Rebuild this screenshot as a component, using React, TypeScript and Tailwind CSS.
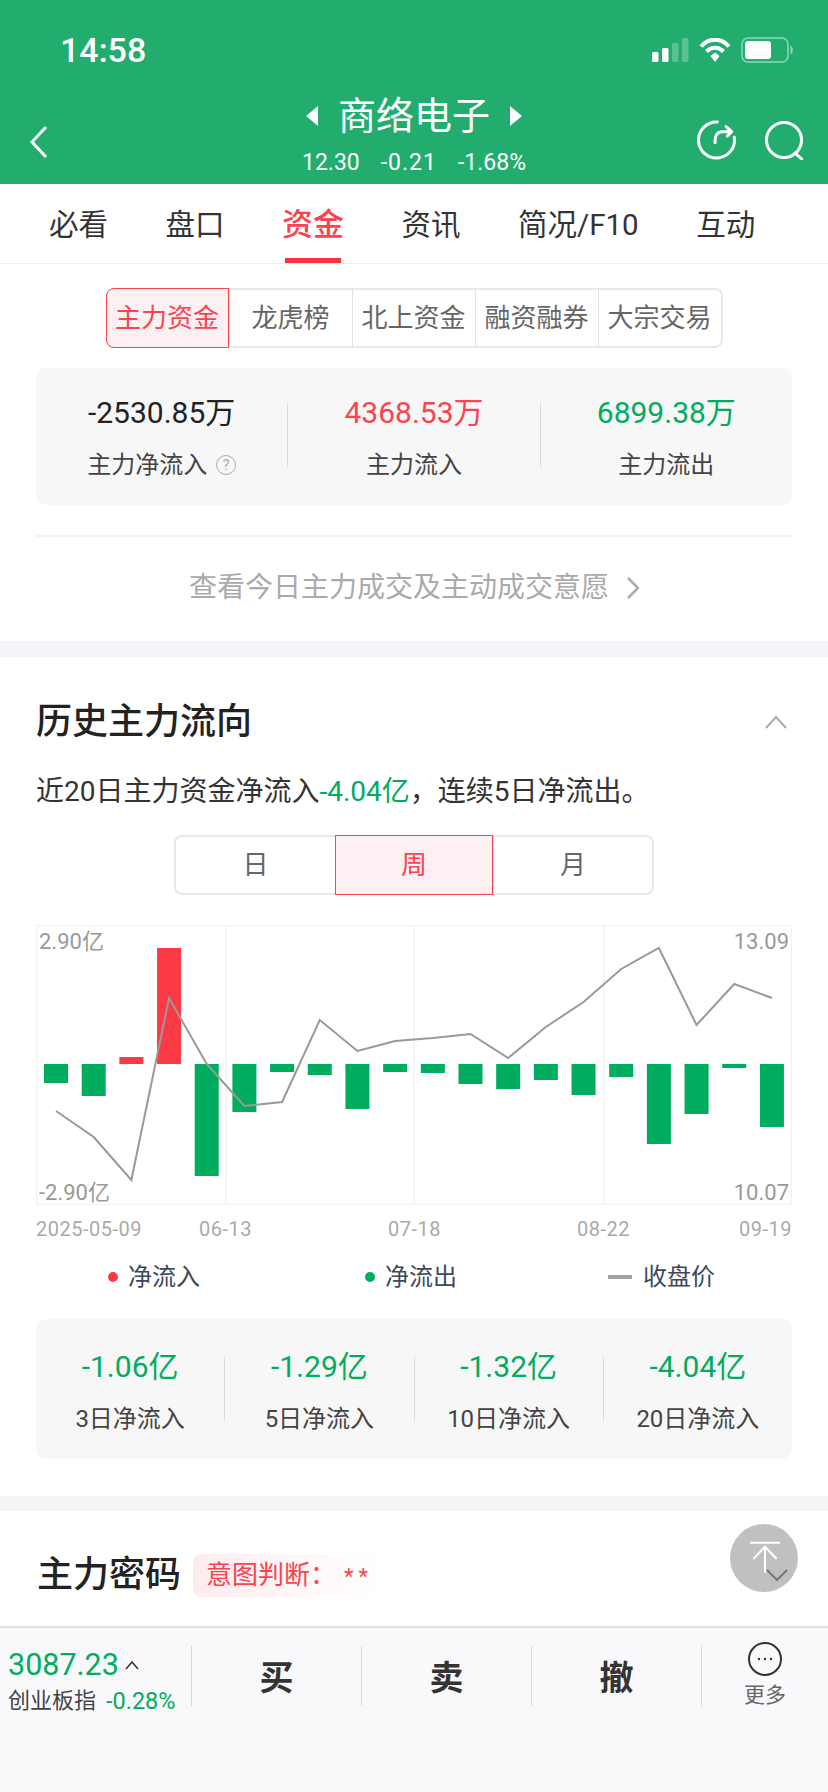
const FONT = "font-['Roboto','Noto_Sans_CJK_SC',sans-serif]";

const bars = [-19, -32, 7, 116, -112, -48, -8, -11, -45, -8, -9, -20, -25, -16, -31, -13, -80, -50, -4, -63];
const closes = [186, 212, 255, 73, 139, 181, 177, 95, 126, 116, 113, 109, 133, 102, 77, 44, 23, 100, 59, 73];

const Chart = () => {
  const x = (i: number) => 20 + 37.68 * i;
  return (
    <div className="relative mt-[30px] mx-[36px] h-[280px]">
      <svg viewBox="0 0 756 280" className="block w-[756px] h-[280px]">
        <rect x="0.5" y="0.5" width="755" height="279" fill="none" stroke="#f2f2f2" strokeWidth="1.5" />
        {[190, 378, 568].map((g) => (
          <line key={g} x1={g} x2={g} y1="0" y2="280" stroke="#f2f2f2" strokeWidth="1.5" />
        ))}
        <line x1="0" x2="756" y1="139" y2="139" stroke="#f2f2f2" strokeWidth="1.5" strokeDasharray="6 8" />
        {bars.map((b, i) => (
          <rect
            key={i}
            x={x(i) - 12}
            y={b > 0 ? 139 - b : 139}
            width="24"
            height={Math.abs(b)}
            fill={b > 0 ? "#fb3a46" : "#00ac5e"}
          />
        ))}
        <polyline
          points={closes.map((c, i) => `${x(i)},${c}`).join(" ")}
          fill="none"
          stroke="#999999"
          strokeWidth="2"
        />
      </svg>
      <span className="absolute left-[3px] top-[3px] text-[22px] leading-[28px] text-[#999]">2.90亿</span>
      <span className="absolute left-[3px] bottom-[-2px] text-[22px] leading-[28px] text-[#999]">-2.90亿</span>
      <span className="absolute right-[3px] top-[3px] text-[22px] leading-[28px] text-[#999]">13.09</span>
      <span className="absolute right-[3px] bottom-[-2px] text-[22px] leading-[28px] text-[#999]">10.07</span>
    </div>
  );
};

const StatCell = ({ value, label, color, help }: { value: string; label: string; color: string; help?: boolean }) => (
  <div className="flex-1 flex flex-col items-center">
    <div className={`text-[30px] leading-[40px] ${color}`}>{value}</div>
    <div className="mt-[12px] flex items-center gap-[9px] text-[24px] leading-[40px] text-[#444]">
      {label}
      {help && (
        <span className="w-[20px] h-[20px] rounded-full border border-[#aaa] text-[#aaa] text-[14px] leading-[18px] text-center">?</span>
      )}
    </div>
  </div>
);

const Segment = ({ items, active, cell }: { items: string[]; active: number; cell: string }) => (
  <div className="flex border-2 border-[#e8e8e8] rounded-[8px] h-[60px]">
    {items.map((t, i) => (
      <div
        key={t}
        className={`${cell} -my-[2px] flex items-center justify-center text-[26px] ${
          i === active
            ? "border border-[#f9434f] bg-[#fdf0f2] text-[#f9434f] first:rounded-l-[8px] first:-ml-[2px]"
            : "text-[#666] border-l border-l-[#e2e2e2] first:border-l-0"
        }`}
      >
        {t}
      </div>
    ))}
  </div>
);

const Divider = ({ h }: { h: string }) => <div className={`w-px ${h} bg-[#d9d9d9] shrink-0`} />;

export default function App() {
  return (
    <div className={`${FONT} relative w-[828px] h-[1792px] overflow-hidden flex flex-col bg-white`}>
      {/* header */}
      <header className="bg-[#22ad6f] text-white h-[184px] pt-[30px] shrink-0">
        <div className="h-[40px] pl-[60px] pr-[34px] flex items-center justify-between">
          <span className="text-[34px] leading-[40px] font-medium">14:58</span>
          <div className="flex items-center gap-[10px]">
            <svg width="37" height="24" viewBox="0 0 37 24">
              <rect x="0" y="14" width="6.500" height="10" rx="1.500" fill="#fff" />
              <rect x="10" y="10" width="6.500" height="14" rx="1.500" fill="#fff" />
              <rect x="20" y="5" width="6.500" height="19" rx="1.500" fill="#fff" fillOpacity="0.25" />
              <rect x="30" y="0" width="6.500" height="24" rx="1.500" fill="#fff" fillOpacity="0.25" />
            </svg>
            <svg width="32" height="25" viewBox="0 0 32 25">
              <path d="M2 8.500C10-.5 22-.5 30 8.500" fill="none" stroke="#fff" strokeWidth="4" />
              <path d="M7.500 13.500C12.500 8.500 19.500 8.500 24.500 13.500" fill="none" stroke="#fff" strokeWidth="4" />
              <path d="M11.500 18 16 14.500 20.500 18 16 24Z" fill="#fff" />
            </svg>
            <svg width="53" height="26" viewBox="0 0 53 26">
              <rect x="1" y="1" width="46" height="24" rx="6" fill="none" stroke="#fff" strokeOpacity="0.5" strokeWidth="1.500" />
              <rect x="4" y="4" width="26" height="18" rx="3" fill="#fff" />
              <path d="M49.500 8.500c3 1 3 8 0 9z" fill="#fff" fillOpacity="0.5" />
            </svg>
          </div>
        </div>
        <div className="h-[114px] flex">
          <div className="w-[150px] pl-[30px] pt-[56px]">
            <svg width="18" height="32" viewBox="0 0 18 32" fill="none" stroke="#fff" strokeWidth="3">
              <path d="M16 1 2 16l14 15" />
            </svg>
          </div>
          <div className="flex-1 flex flex-col items-center">
            <div className="mt-[24px] h-[44px] flex items-center gap-[20px]">
              <span className="w-0 h-0 border-y-[10px] border-y-transparent border-r-[12px] border-r-white" />
              <span className="text-[38px] leading-[44px]">商络电子</span>
              <span className="w-0 h-0 border-y-[10px] border-y-transparent border-l-[12px] border-l-white" />
            </div>
            <div className="mt-[11px] flex gap-[21px] text-[23px] leading-[28px]">
              <span>12.30</span>
              <span className="tracking-[1px]">-0.21</span>
              <span>-1.68%</span>
            </div>
          </div>
          <div className="w-[150px] pr-[24px] pt-[50px] flex justify-end gap-[28px]">
            <svg width="40" height="40" viewBox="0 0 40 40" fill="none" stroke="#fff" strokeWidth="3" strokeLinecap="round" strokeLinejoin="round">
              <path d="M21.300 2A18 18 0 1 0 38.300 17.300" />
              <path d="M19 22.700C19 15 21 11.700 27 11.700H35.500M30 6.700l5.700 5-4.400 4.300" />
            </svg>
            <svg width="40" height="40" viewBox="0 0 40 40" fill="none" stroke="#fff" strokeWidth="3" strokeLinecap="round">
              <circle cx="20" cy="20" r="17.500" />
              <path d="m31 33 6.700 6" />
            </svg>
          </div>
        </div>
      </header>

      {/* tabs */}
      <nav className="h-[80px] shrink-0 border-b border-[#eeeeee] pl-[49px] flex gap-[57.500px] text-[29.500px] text-[#333]">
        <span className="leading-[82px]">必看</span>
        <span className="leading-[82px]">盘口</span>
        <span className="relative leading-[82px] text-[31px] font-medium text-[#f9434f]">
          资金
          <span className="absolute left-[3px] right-[3px] bottom-0 h-[5px] bg-[#f9343f]" />
        </span>
        <span className="leading-[82px]">资讯</span>
        <span className="leading-[82px]">简况/F10</span>
        <span className="leading-[82px]">互动</span>
      </nav>

      <main className="flex-1 min-h-0 overflow-hidden">
        <section className="h-[377px] pt-[24px]">
          <div className="flex justify-center">
            <Segment items={["主力资金", "龙虎榜", "北上资金", "融资融券", "大宗交易"]} active={0} cell="w-[123px]" />
          </div>
          <div className="mx-[36px] mt-[20px] h-[137px] rounded-[10px] bg-[#f7f7f7] pt-[25px] flex">
            <StatCell value="-2530.85万" label="主力净流入" color="text-[#222]" help />
            <div className="pt-[10px]"><Divider h="h-[64px]" /></div>
            <StatCell value="4368.53万" label="主力流入" color="text-[#f9434f]" />
            <div className="pt-[10px]"><Divider h="h-[64px]" /></div>
            <StatCell value="6899.38万" label="主力流出" color="text-[#00ac5e]" />
          </div>
          <div className="mx-[36px] mt-[30px] h-[2px] bg-[#f3f3f3]" />
          <div className="mt-[27px] flex items-center justify-center gap-[18px] text-[28px] leading-[48px] text-[#aaaaaa]">
            查看今日主力成交及主动成交意愿
            <svg width="12" height="22" viewBox="0 0 12 22" fill="none" stroke="#aaa" strokeWidth="2.500">
              <path d="m1 1 10 10L1 21" />
            </svg>
          </div>
        </section>

        <div className="h-[16px] bg-[#f4f5f9]" />

        <section className="h-[839px] pt-[43px]">
          <div className="px-[36px] h-[44px] flex items-center justify-between">
            <h2 className="text-[36px] leading-[44px] font-medium text-[#222]">历史主力流向</h2>
            <svg width="24" height="14" viewBox="0 0 24 14" fill="none" stroke="#aaa" strokeWidth="2" className="mr-[4px]">
              <path d="m2 13 10-11 10 11" />
            </svg>
          </div>
          <p className="mt-[26px] px-[36px] text-[28px] leading-[44px] text-[#333]">
            近20日主力资金净流入<span className="text-[#00ac5e]">-4.04亿</span>，连续5日净流出。
          </p>
          <div className="mt-[21px] flex justify-center">
            <Segment items={["日", "周", "月"]} active={1} cell="w-[158.500px]" />
          </div>
          <Chart />
          <div className="relative mx-[36px] h-[28px] mt-[10px] text-[20px] leading-[28px] text-[#aaa] tracking-[0.5px]">
            <span className="absolute left-0">2025-05-09</span>
            <span className="absolute left-[163px]">06-13</span>
            <span className="absolute left-[352px]">07-18</span>
            <span className="absolute left-[541px]">08-22</span>
            <span className="absolute right-0">09-19</span>
          </div>
          <div className="mt-[17px] flex text-[24px] leading-[34px] text-[#3d4859]">
            <div className="ml-[108px] w-[257px] flex items-center gap-[10px]">
              <span className="w-[10px] h-[10px] rounded-full bg-[#fb3a46]" />净流入
            </div>
            <div className="w-[243px] flex items-center gap-[10px]">
              <span className="w-[10px] h-[10px] rounded-full bg-[#00ac5e]" />净流出
            </div>
            <div className="flex items-center gap-[11px]">
              <span className="w-[24px] h-[4px] bg-[#a3a3a3]" />收盘价
            </div>
          </div>
          <div className="mx-[36px] mt-[25px] h-[140px] rounded-[10px] bg-[#f7f7f7] pt-[28px] flex">
            {[
              ["-1.06亿", "3日净流入"],
              ["-1.29亿", "5日净流入"],
              ["-1.32亿", "10日净流入"],
              ["-4.04亿", "20日净流入"],
            ].map(([v, l], i) => (
              <div key={l} className="contents">
                {i > 0 && <div className="pt-[10px]"><Divider h="h-[64px]" /></div>}
                <div className="flex-1 flex flex-col items-center">
                  <div className="text-[30px] leading-[40px] text-[#00ac5e]">{v}</div>
                  <div className="mt-[12px] text-[24px] leading-[40px] text-[#444]">{l}</div>
                </div>
              </div>
            ))}
          </div>
        </section>

        <div className="h-[15px] bg-[#f4f5f9]" />

        <section className="px-[37px] pt-[42px] flex items-center gap-[12px]">
          <h2 className="text-[36px] leading-[44px] font-medium text-[#222]">主力密码</h2>
          <span className="w-[188px] h-[43px] pl-[13px] rounded-[8px] bg-gradient-to-r from-[#fdecee] to-white text-[26px] leading-[43px] text-[#f9434f]">
            意图判断：<span className="ml-[8px] text-[22px] tracking-[5px]">**</span>
          </span>
        </section>
      </main>

      {/* floating to-top button */}
      <svg width="68" height="68" viewBox="0 0 68 68" className="absolute left-[730px] top-[1524px]">
        <circle cx="34" cy="34" r="34" fill="#c0c0c0" />
        <path d="M20 18.700h30M35 22v27M23.300 35 35 22.700 46.700 35" fill="none" stroke="#fff" strokeWidth="2" />
      </svg>
      <svg width="24" height="14" viewBox="0 0 24 14" fill="none" stroke="#777" strokeWidth="2" className="absolute left-[765px] top-[1569px]">
        <path d="m2 1 10 10L22 1" />
      </svg>

      {/* bottom bar */}
      <footer className="h-[166px] shrink-0 bg-[#f9f9fb] border-t-2 border-[#e2e2e2] pt-[18px] flex">
        <div className="w-[191px] pl-[8px]">
          <div className="flex items-center gap-[6px] text-[30.500px] leading-[38px] text-[#00ac5e]">
            3087.23
            <svg width="14" height="10" viewBox="0 0 14 10" fill="none" stroke="#333" strokeWidth="1.500">
              <path d="m1 9 6-7 6 7" />
            </svg>
          </div>
          <div className="-mt-[1px] flex gap-[10px] text-[22px] leading-[36px] text-[#444]">
            创业板指<span className="text-[23.500px] text-[#00ac5e]">-0.28%</span>
          </div>
        </div>
        <Divider h="h-[60px]" />
        <div className="w-[169px] h-[64px] flex items-center justify-center text-[34px] font-semibold text-[#333]">买</div>
        <Divider h="h-[60px]" />
        <div className="w-[169px] h-[64px] flex items-center justify-center text-[34px] font-semibold text-[#333]">卖</div>
        <Divider h="h-[60px]" />
        <div className="w-[169px] h-[64px] flex items-center justify-center text-[34px] font-semibold text-[#333]">撤</div>
        <Divider h="h-[60px]" />
        <div className="flex-1 -mt-[4px] flex flex-col items-center">
          <svg width="34" height="34" viewBox="0 0 34 34" fill="none" stroke="#333" strokeWidth="2">
            <circle cx="17" cy="17" r="16" />
            <circle cx="11" cy="17" r="1.200" fill="#333" stroke="none" />
            <circle cx="17" cy="17" r="1.200" fill="#333" stroke="none" />
            <circle cx="23" cy="17" r="1.200" fill="#333" stroke="none" />
          </svg>
          <span className="mt-[5px] text-[21px] leading-[28px] text-[#666]">更多</span>
        </div>
      </footer>
    </div>
  );
}
